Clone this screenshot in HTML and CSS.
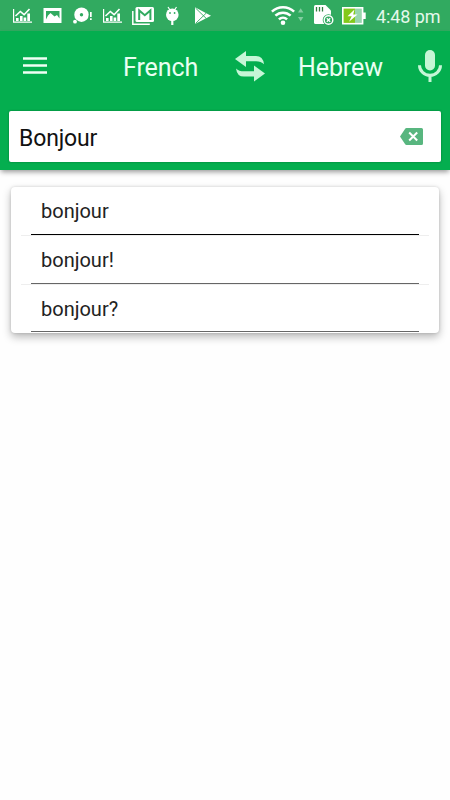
FILE: index.html
```html
<!DOCTYPE html>
<html lang="en">
<head>
<meta charset="utf-8">
<title>Translator</title>
<link rel="stylesheet" href="styles.css">
</head>
<body>
<div class="status">
  <div class="notices">
    <svg viewBox="0 0 20 20"><use href="#chart"/></svg>
    <svg viewBox="0 0 20 20"><path fill="#fff" fill-rule="evenodd" d="M.5 2h18v15H.5zM3 5V13.500L5 9.500 7.500 7l4 3.500 2.500-1.500 2.500 3.500V5z"/></svg>
    <svg viewBox="0 0 20 20"><circle cx="8.500" cy="8.700" r="7.200" fill="#fff"/><circle cx="8.500" cy="8.700" r="1.700" fill="#31aa60"/><circle cx="2" cy="15.700" r="1.900" fill="#fff"/><path fill="#fff" d="M17 6h1.700v5H17zM17 12.200h1.700v1.700H17z"/></svg>
    <svg viewBox="0 0 20 20"><g id="chart" fill="#fff"><path d="M0 3h1.200v12.500H19v1.300H0zM3 12h2.600v3H3zM7 10h2.600v5H7zM10.600 11.500h2.600v3.500h-2.600zM14.300 7.500H17v7.500h-2.700z"/><path d="M2.500 10 7.300 5.500l3.800 3.200L16.500 3" fill="none" stroke="#fff" stroke-width="1.600"/></g></svg>
    <svg class="mail" viewBox="0 0 23 20"><path d="M.8 5v13.200h17" fill="none" stroke="#fff" stroke-width="1.500"/><rect x="3.500" y="1" width="18.500" height="15" rx="1.500" fill="#fff"/><path d="M7.200 14V4.500l5.600 4.700 5.600-4.700V14" fill="none" stroke="#31aa60" stroke-width="2"/></svg>
    <svg viewBox="0 0 20 20"><path d="m5 1 2 3m6.500-3-2 3" stroke="#fff" stroke-width="1.200"/><circle cx="9.300" cy="8.800" r="6.300" fill="#fff"/><path d="M9.300 13v6" stroke="#fff" stroke-width="2.200"/><circle cx="7" cy="7" r=".9" fill="#31aa60"/><circle cx="11.600" cy="7" r=".9" fill="#31aa60"/></svg>
    <svg viewBox="0 0 20 20"><path fill="#fff" d="M2 1.300 18 9.700 2 18z"/><path d="m2.500 2 10.800 10.500M2.500 17.500 13.300 7" stroke="#31aa60" stroke-width=".9"/></svg>
  </div>
  <div class="system">
    <svg class="wifi" viewBox="0 0 33 20"><g fill="none" stroke="#fff" stroke-width="2.500"><path d="M.9 6.700a16.200 16.200 0 0 1 22.200 0M4.400 10.700a11 11 0 0 1 15.200 0M7.900 14.400a6 6 0 0 1 8.200 0"/></g><circle cx="12" cy="17.700" r="2.300" fill="#fff"/><path d="m27 7.500 2.700-4.300 2.700 4.300zM27 12h5.400l-2.700 4.300z" fill="#82cda0"/></svg>
    <svg class="sd" viewBox="0 0 20 20"><path fill="#fff" d="M1.500 0h10L17 5.500V19H1.500Q0 19 0 17.500v-16Q0 0 1.500 0z"/><path d="M2.500 2v4.500M5.500 2v4.500M8.500 2v4.500" stroke="#31803f" stroke-width="1.300"/><circle cx="14.500" cy="15" r="5.800" fill="#31aa60"/><circle cx="14.500" cy="15" r="4.300" fill="#31aa60" stroke="#fff" stroke-width="1.400"/><path d="m12.800 13.300 3.400 3.400m0-3.400-3.400 3.400" stroke="#fff" stroke-width="1.300"/></svg>
    <svg class="battery" viewBox="0 0 24 18"><path fill="#83c91b" d="M1 1h14v15H1z"/><path fill="#98d6ad" d="M13 1h7v15h-7z"/><rect x=".8" y=".8" width="19.800" height="15.900" fill="none" stroke="#fff" stroke-width="1.600"/><path fill="#fff" d="M21 5.500h2.700v6.500H21zM12.500 2.500 5.500 9.300h4.200L7 14.800l8.500-7.200h-4.300z"/></svg>
    <span class="time">4:48 pm</span>
  </div>
</div>
<header class="header">
  <div class="toolbar">
    <svg class="menu" viewBox="0 0 24 18"><path d="M0 1.500h24M0 8.500h24M0 15.500h24" stroke="#effff5" stroke-width="2.600"/></svg>
    <span class="lang from">French</span>
    <svg class="swap" viewBox="0 0 30 31"><g fill="#c6f6d7"><path id="arrow" d="M0 8 11 0v5h10Q28 5 29 13.200 26 10.300 21 10.300H11V16z"/><use href="#arrow" transform="rotate(180 15 15.300)"/></g></svg>
    <span class="lang to">Hebrew</span>
    <svg class="mic" viewBox="0 0 24 32"><rect x="7" y="0" width="10" height="20.500" rx="5" fill="#c6f6d7"/><path d="M1.500 15.300a10.500 10 0 0 0 21 0M12 25.500V32" fill="none" stroke="#c6f6d7" stroke-width="3"/></svg>
  </div>
  <div class="search">
    <span>Bonjour</span>
    <svg class="clear" viewBox="0 0 23 17"><path fill="#58b67f" d="M6.500 0H21.500Q23 0 23 1.500v14Q23 17 21.500 17H6.500Q5.500 17 5 16L0 8.500 5 1Q5.500 0 6.500 0z"/><path d="m9.200 4.500 8 8m0-8-8 8" stroke="#fff" stroke-width="2"/></svg>
  </div>
</header>
<ul class="suggestions">
  <li><span>bonjour</span></li>
  <li><span>bonjour!</span></li>
  <li><span>bonjour?</span></li>
</ul>
</body>
</html>
```

FILE: styles.css
```css
* { box-sizing: border-box; }
body {
  margin: 0;
  min-height: 800px;
  background: #fefefe;
  font-family: Roboto, "Liberation Sans", sans-serif;
}
svg { display: block; flex: none; overflow: visible; }
.status {
  display: flex;
  justify-content: space-between;
  height: 31px;
  padding: 0 11px 0 13px;
  background: #31aa60;
}
.notices { display: flex; gap: 10px; padding-top: 6px; }
.notices svg { width: 20px; height: 20px; }
.notices .mail { width: 23px; margin: 0 -2px 0 -1px; }
.system { display: flex; align-items: flex-start; padding-top: 5px; }
.wifi { width: 33px; height: 20px; margin-right: 10px; }
.sd { width: 20px; height: 20px; margin-right: 8px; }
.battery { width: 24px; height: 18px; margin: 2px 10px 0 0; }
.time {
  width: 63px;
  font-size: 18px;
  line-height: 23px;
  letter-spacing: -.1px;
  color: #e4f8eb;
  white-space: nowrap;
}
.header {
  height: 139px;
  padding: 0 9px;
  background: #04ae4f;
  box-shadow: 0 3px 5px -1px rgba(0, 0, 0, .4);
}
.toolbar { display: flex; align-items: center; height: 80px; padding: 0 0 10px 14px; }
.menu { width: 24px; height: 18px; }
.lang {
  flex: none;
  font-size: 25px;
  line-height: 30px;
  letter-spacing: -.1px;
  color: #e9fff2;
}
.from { width: 76px; margin: 3px 0 0 76px; }
.swap { width: 30px; height: 31px; margin-left: 36px; }
.to { width: 86px; margin: 3px 0 0 33px; }
.mic { width: 24px; height: 32px; margin-left: 34px; }
.search {
  display: flex;
  align-items: center;
  justify-content: space-between;
  height: 51px;
  padding: 0 18px 0 10px;
  border-radius: 2px;
  background: #fff;
  box-shadow: 0 0 2px rgba(0, 60, 20, .5);
  font-size: 23px;
  letter-spacing: -.15px;
  color: #111;
}
.search span { padding-top: 3px; }
.clear { width: 23px; height: 17px; }
.suggestions {
  list-style: none;
  width: 428px;
  height: 146px;
  margin: 17px 0 0 11px;
  padding: 0 10px;
  border-radius: 4px;
  background: #fff;
  box-shadow: 0 4px 8px rgba(0, 0, 0, .28), 0 0 3px rgba(0, 0, 0, .15);
}
.suggestions li { height: 49px; padding: 0 10px; border-bottom: 1px solid #eee; }
.suggestions span {
  display: block;
  height: 48px;
  padding: 0 10px;
  border-bottom: 1px solid #666;
  font-size: 20px;
  line-height: 48px;
  color: #222;
}
.suggestions li:first-child span { border-color: #000; }
.suggestions li:last-child { height: 48px; border: 0; }
.suggestions li:last-child span { height: 47px; }
```
